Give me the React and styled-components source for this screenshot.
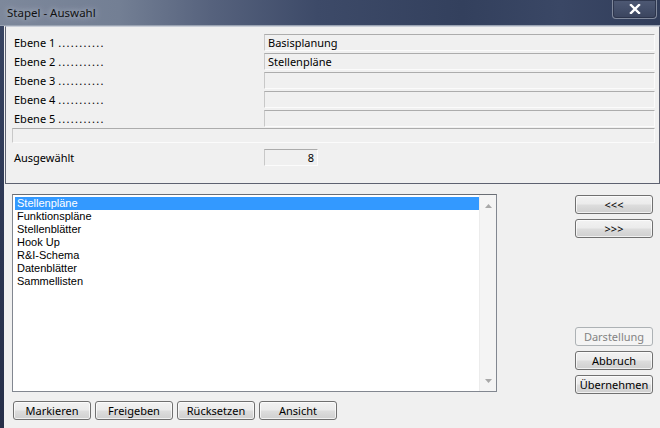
import React from "react";
import styled, { createGlobalStyle } from "styled-components";

const GlobalStyle = createGlobalStyle`
  html, body {
    margin: 0;
    padding: 0;
    background: #2a3450;
  }
  * {
    box-sizing: border-box;
  }
`;

const ebenen = [
  { label: "Ebene 1", value: "Basisplanung" },
  { label: "Ebene 2", value: "Stellenpläne" },
  { label: "Ebene 3", value: "" },
  { label: "Ebene 4", value: "" },
  { label: "Ebene 5", value: "" },
];

const listItems = [
  "Stellenpläne",
  "Funktionspläne",
  "Stellenblätter",
  "Hook Up",
  "R&I-Schema",
  "Datenblätter",
  "Sammellisten",
];

function App() {
  return (
    <>
      <GlobalStyle />
      <Window>
        <TitleBar>
          <Title>Stapel - Auswahl</Title>
          <CloseButton>
            <svg width="12" height="10" viewBox="0 0 12 10">
              <path d="M2 1 L10 9 M10 1 L2 9" stroke="#fff" strokeWidth="2.4" strokeLinecap="square" />
            </svg>
          </CloseButton>
        </TitleBar>
        <Client>
          <TopPanel>
            {ebenen.map((e) => (
              <FieldRow key={e.label}>
                <Label>
                  {e.label} <Dots>...........</Dots>
                </Label>
                <Field>{e.value}</Field>
              </FieldRow>
            ))}
            <WideField />
            <FieldRow $gap={4}>
              <Label>Ausgewählt</Label>
              <Field $width={54} $align="right">8</Field>
            </FieldRow>
          </TopPanel>
          <Lower>
            <LeftCol>
              <ListBox>
                <Items>
                  {listItems.map((item, i) => (
                    <Item key={item} $selected={i === 0}>
                      {item}
                    </Item>
                  ))}
                </Items>
                <ScrollBar>
                  <svg width="7" height="4" viewBox="0 0 7 4">
                    <path d="M0 4 L3.5 0 L7 4 Z" fill="#a8a8a8" />
                  </svg>
                  <svg width="7" height="4" viewBox="0 0 7 4">
                    <path d="M0 0 L3.5 4 L7 0 Z" fill="#a8a8a8" />
                  </svg>
                </ScrollBar>
              </ListBox>
              <ButtonRow>
                <Button>Markieren</Button>
                <Button>Freigeben</Button>
                <Button>Rücksetzen</Button>
                <Button>Ansicht</Button>
              </ButtonRow>
            </LeftCol>
            <RightCol>
              <ButtonGroup>
                <Button>&lt;&lt;&lt;</Button>
                <Button>&gt;&gt;&gt;</Button>
              </ButtonGroup>
              <ButtonGroup>
                <Button disabled>Darstellung</Button>
                <Button>Abbruch</Button>
                <Button>Übernehmen</Button>
              </ButtonGroup>
            </RightCol>
          </Lower>
        </Client>
      </Window>
    </>
  );
}

export default App;

const uiFont = `"Noto Sans", "Open Sans", "DejaVu Sans", sans-serif`;

const Window = styled.div`
  width: 660px;
  height: 428px;
  display: flex;
  flex-direction: column;
  background: linear-gradient(180deg, #3a4663 0%, #2b3551 60%, #262f49 100%);
  overflow: hidden;
`;

const TitleBar = styled.div`
  height: 26px;
  flex: none;
  display: flex;
  justify-content: space-between;
  align-items: flex-start;
  background: linear-gradient(
    90deg,
    #7d889b 0%,
    #737f94 18%,
    #56627d 32%,
    #3d4a68 48%,
    #33405d 70%,
    #3a4765 85%,
    #313d5a 100%
  );
  border-bottom: 1px solid #9aa3b2;
`;

const Title = styled.span`
  padding: 5px 0 0 7px;
  font-family: ${uiFont};
  font-size: 11.5px;
  color: #111;
  text-shadow: 0 0 6px rgba(220, 226, 238, 0.9);
`;

const CloseButton = styled.div`
  width: 45px;
  height: 19px;
  margin-right: 3px;
  display: flex;
  align-items: center;
  justify-content: center;
  border: 1px solid #7f889b;
  border-top: none;
  border-radius: 0 0 4px 4px;
  background: linear-gradient(180deg, #4e5974 0%, #434e69 55%, #3a445e 100%);
  box-shadow: inset 0 0 0 1px rgba(40, 48, 70, 0.8);
`;

const Client = styled.div`
  flex: 1;
  display: flex;
  flex-direction: column;
  margin-left: 4px;
  background: #f0f0f0;
`;

const TopPanel = styled.div`
  height: 158px;
  margin-left: 1px;
  padding: 7px 4px 0 6px;
  display: flex;
  flex-direction: column;
  gap: 2px;
  border: 1px solid #5d6170;
  border-top-color: #c9ced8;
  background: #f0f0f0;
`;

const FieldRow = styled.div`
  display: flex;
  align-items: center;
  height: 17px;
  margin-top: ${(p) => (p.$gap ? `${p.$gap}px` : "0")};
`;

const Label = styled.span`
  width: 252px;
  padding-left: 2px;
  font-family: ${uiFont};
  font-size: 11px;
  color: #000;
  white-space: pre;
`;

const Dots = styled.span`
  letter-spacing: 1.3px;
`;

const Field = styled.div`
  width: ${(p) => (p.$width ? `${p.$width}px` : "auto")};
  flex: ${(p) => (p.$width ? "none" : "1")};
  height: 17px;
  padding: 0 3px;
  display: flex;
  align-items: center;
  justify-content: ${(p) => (p.$align === "right" ? "flex-end" : "flex-start")};
  border: 1px solid #fbfbfb;
  border-top-color: #acacac;
  border-left-color: #c8c8c8;
  background: #f0f0f0;
  font-family: ${uiFont};
  font-size: 11px;
  color: #000;
`;

const WideField = styled(Field)`
  height: 15px;
  margin-top: -1px;
  flex: none;
`;

const Lower = styled.div`
  flex: 1;
  display: flex;
  padding: 10px 7px 0 8px;
  gap: 78px;
`;

const LeftCol = styled.div`
  width: 485px;
  display: flex;
  flex-direction: column;
  gap: 9px;
`;

const ListBox = styled.div`
  height: 198px;
  display: flex;
  border: 1px solid #828790;
  border-top-color: #6a6e75;
  background: #fff;
  padding: 2px 0 1px 2px;
`;

const Items = styled.div`
  flex: 1;
  display: flex;
  flex-direction: column;
`;

const Item = styled.div`
  height: 13px;
  line-height: 13px;
  padding-left: 2px;
  font-family: "Liberation Sans", Arial, sans-serif;
  font-size: 11px;
  color: ${(p) => (p.$selected ? "#fff" : "#000")};
  background: ${(p) => (p.$selected ? "#3399ff" : "transparent")};
`;

const ScrollBar = styled.div`
  width: 17px;
  margin-top: -2px;
  margin-bottom: -1px;
  display: flex;
  flex-direction: column;
  justify-content: space-between;
  align-items: center;
  padding: 9px 0 8px;
  background: #f4f4f4;
  border-left: 1px solid #ececec;
`;

const ButtonRow = styled.div`
  display: flex;
  gap: 4px;
  padding-left: 1px;
`;

const RightCol = styled.div`
  width: 78px;
  height: 199px;
  margin-top: 1px;
  display: flex;
  flex-direction: column;
  justify-content: space-between;
`;

const ButtonGroup = styled.div`
  display: flex;
  flex-direction: column;
  gap: 5px;
`;

const Button = styled.button`
  width: 78px;
  height: 19px;
  padding: 0;
  border: 1px solid #707070;
  border-radius: 3px;
  background: linear-gradient(180deg, #f2f2f2 0%, #ebebeb 48%, #dddddd 52%, #cfcfcf 100%);
  box-shadow: inset 0 0 0 1px rgba(255, 255, 255, 0.7);
  font-family: ${uiFont};
  font-size: 11px;
  color: #000;
  line-height: 15px;

  &:disabled {
    border-color: #adb2b5;
    background: #f4f4f4;
    color: #838383;
    box-shadow: none;
  }
`;
